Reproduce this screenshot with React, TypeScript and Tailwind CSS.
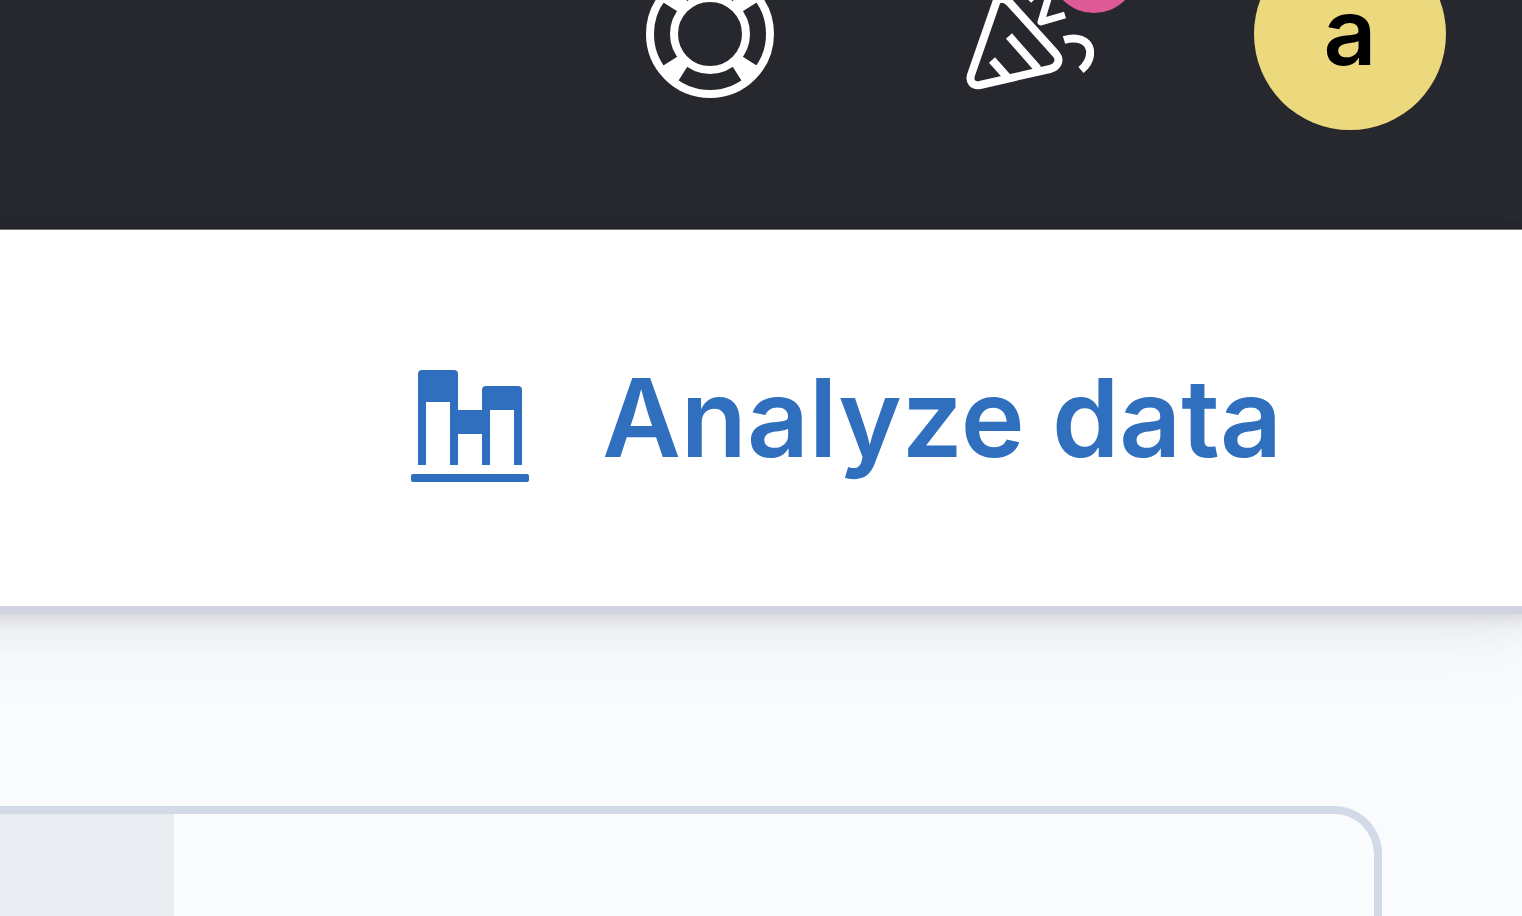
const HELP_SPOKE = 'M-49 33 L-30 21 L-21 30 L-33 49 Z';

function HelpIcon() {
  return (
    <svg className="size-32" viewBox="-64 -64 128 128" fill="none" aria-hidden="true">
      <circle r="60" stroke="white" strokeWidth="8" />
      <circle r="36" stroke="white" strokeWidth="8" />
      {[0, 90, 180, 270].map((angle) => (
        <path key={angle} d={HELP_SPOKE} fill="white" transform={`rotate(${angle})`} />
      ))}
    </svg>
  );
}

function CheerIcon() {
  return (
    <svg
      className="size-32"
      viewBox="0 0 128 128"
      fill="none"
      stroke="white"
      strokeWidth="8"
      strokeLinejoin="round"
      aria-hidden="true"
    >
      <path d="M30 33 L5 105 C3 112 7 116 14 115 L84 99 C92 97 95 90 90 84 L44 33 C39 28 32 27 30 33 Z" />
      <path d="M34 29 H40" />
      <path d="M43 66 L72 99" />
      <path d="M26 90 L42 108" />
      <path d="M82 29 L75 52 L99 45" strokeWidth="7" />
      <path d="M62 24 L68 30" />
      <path d="M98 70 C111 66 122 70 124 80 C125 88 121 95 115 100" />
    </svg>
  );
}

function AnalyzeIcon() {
  return (
    <svg className="size-32" viewBox="0 0 128 128" fill="currentColor" aria-hidden="true">
      <path d="M16 16 H48 Q52 16 52 20 V56 H76 V36 Q76 32 80 32 H112 Q116 32 116 36 V111 H108 V56 H84 V111 H76 V80 H52 V111 H44 V48 H20 V111 H12 V20 Q12 16 16 16 Z" />
      <rect x="5" y="120" width="118" height="8" rx="2" />
    </svg>
  );
}

export default function App() {
  return (
    <div className="flex min-h-screen flex-col overflow-hidden bg-[#fafbfd] font-['Inter',sans-serif]">
      <header className="flex h-[230px] items-end justify-end gap-32 overflow-hidden border-b border-[#77777b] bg-[#27282e] pr-[76px] pb-[99px]">
        <button type="button" aria-label="Help" className="flex size-48 shrink-0 items-center justify-center">
          <HelpIcon />
        </button>
        <button type="button" aria-label="News" className="relative flex size-48 shrink-0 items-center justify-center">
          <CheerIcon />
          <span className="absolute -top-[13px] left-[116px] size-22 rounded-full bg-[#dd5a97]" />
        </button>
        <button
          type="button"
          className="flex size-48 shrink-0 items-center justify-center rounded-full bg-[#ecd97e] pb-1 text-[92px] leading-[60px] font-semibold text-black"
        >
          a
        </button>
      </header>

      <nav className="z-10 -mr-4 -ml-32 flex h-96 items-center justify-end border-b-8 border-[#cfd4e0] bg-white pr-64 shadow-[0_6px_11px_rgba(0,0,0,0.07),0_15px_32px_rgba(0,0,0,0.05),0_36px_80px_rgba(0,0,0,0.04)]">
        <a href="#analyze" className="flex items-center gap-[68px] text-[108px] leading-none font-semibold text-[#2f6fbe]">
          <AnalyzeIcon />
          <span className="whitespace-nowrap">Analyze data</span>
        </a>
      </nav>

      <main className="flex flex-1 flex-col pt-48 pr-[140px]">
        <section className="flex flex-1 overflow-hidden rounded-tr-[48px] border-t-8 border-r-8 border-[#d3dae7] bg-[#fbfcfe]">
          <div className="w-[174px] bg-[#e9edf2]" />
        </section>
      </main>
    </div>
  );
}
